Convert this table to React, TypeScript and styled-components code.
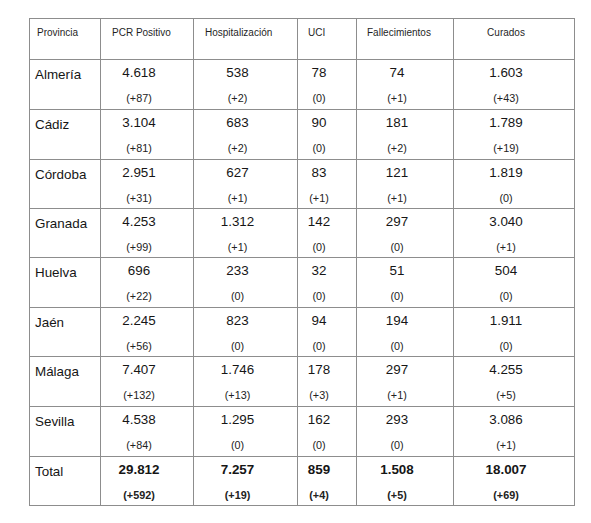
import styled, { createGlobalStyle } from "styled-components"

const GlobalStyle = createGlobalStyle`
html, body {
  margin: 0;
  padding: 0;
  background: #ffffff;
}
body {
  font-family: "Liberation Sans", Arial, sans-serif;
  color: #1b1b1b;
}
`

const Page = styled.div`
width: 591px;
height: 523px;
padding: 18px 0 0 29px;
box-sizing: border-box;
background: #ffffff;
`

const Table = styled.table`
border-collapse: collapse;
table-layout: fixed;
width: 545px;
`

const Col = styled.col<{ $w: number }>`
width: ${(p) => p.$w}px;
`

const HeadRow = styled.tr`
height: 41px;
`

const BodyRow = styled.tr<{ $h: number }>`
height: ${(p) => p.$h}px;
`

const HeadCell = styled.th<{ $center?: boolean; $pad: number }>`
border: 1px solid #8d8d8d;
padding: 8px ${(p) => (p.$center ? 16 : 0)}px 0 ${(p) => (p.$center ? 0 : p.$pad)}px;
vertical-align: top;
text-align: ${(p) => (p.$center ? "center" : "left")};
font-size: 10px;
font-weight: 400;
line-height: 12px;
color: #1f1f1f;
white-space: nowrap;
`

const NameCell = styled.td`
border: 1px solid #8d8d8d;
padding: 7px 0 0 5px;
vertical-align: top;
font-size: 13.4px;
line-height: 16px;
color: #161616;
`

const ValueCell = styled.td<{ $bold?: boolean }>`
border: 1px solid #8d8d8d;
padding: 5px 16px 0 0;
vertical-align: top;
text-align: center;
font-weight: ${(p) => (p.$bold ? 700 : 400)};
color: #161616;
`

const Main = styled.div`
font-size: 13.4px;
line-height: 16px;
`

const Delta = styled.div`
margin-top: 10px;
font-size: 10.8px;
line-height: 14px;
color: #222222;
`

const columns = [
  { label: "Provincia", w: 71, pad: 7 },
  { label: "PCR Positivo", w: 93, pad: 11 },
  { label: "Hospitalización", w: 104, pad: 11 },
  { label: "UCI", w: 59, pad: 10 },
  { label: "Fallecimientos", w: 97, pad: 10 },
  { label: "Curados", w: 121, pad: 0, center: true },
]

type Row = { name: string; values: [string, string][]; total?: boolean }

const rows: Row[] = [
  { name: "Almería", values: [["4.618", "(+87)"], ["538", "(+2)"], ["78", "(0)"], ["74", "(+1)"], ["1.603", "(+43)"]] },
  { name: "Cádiz", values: [["3.104", "(+81)"], ["683", "(+2)"], ["90", "(0)"], ["181", "(+2)"], ["1.789", "(+19)"]] },
  { name: "Córdoba", values: [["2.951", "(+31)"], ["627", "(+1)"], ["83", "(+1)"], ["121", "(+1)"], ["1.819", "(0)"]] },
  { name: "Granada", values: [["4.253", "(+99)"], ["1.312", "(+1)"], ["142", "(0)"], ["297", "(0)"], ["3.040", "(+1)"]] },
  { name: "Huelva", values: [["696", "(+22)"], ["233", "(0)"], ["32", "(0)"], ["51", "(0)"], ["504", "(0)"]] },
  { name: "Jaén", values: [["2.245", "(+56)"], ["823", "(0)"], ["94", "(0)"], ["194", "(0)"], ["1.911", "(0)"]] },
  { name: "Málaga", values: [["7.407", "(+132)"], ["1.746", "(+13)"], ["178", "(+3)"], ["297", "(+1)"], ["4.255", "(+5)"]] },
  { name: "Sevilla", values: [["4.538", "(+84)"], ["1.295", "(0)"], ["162", "(0)"], ["293", "(0)"], ["3.086", "(+1)"]] },
  { name: "Total", total: true, values: [["29.812", "(+592)"], ["7.257", "(+19)"], ["859", "(+4)"], ["1.508", "(+5)"], ["18.007", "(+69)"]] },
]

const heights = [50, 50, 49, 49, 50, 49, 50, 50, 49]

export default function App() {
  return (
    <Page>
      <GlobalStyle />
      <Table>
        <colgroup>
          {columns.map((c) => (
            <Col key={c.label} $w={c.w} />
          ))}
        </colgroup>
        <thead>
          <HeadRow>
            {columns.map((c) => (
              <HeadCell key={c.label} $center={c.center} $pad={c.pad}>
                {c.label}
              </HeadCell>
            ))}
          </HeadRow>
        </thead>
        <tbody>
          {rows.map((r, i) => (
            <BodyRow key={r.name} $h={heights[i]}>
              <NameCell>{r.name}</NameCell>
              {r.values.map(([main, delta], j) => (
                <ValueCell key={j} $bold={r.total}>
                  <Main>{main}</Main>
                  <Delta>{delta}</Delta>
                </ValueCell>
              ))}
            </BodyRow>
          ))}
        </tbody>
      </Table>
    </Page>
  )
}
